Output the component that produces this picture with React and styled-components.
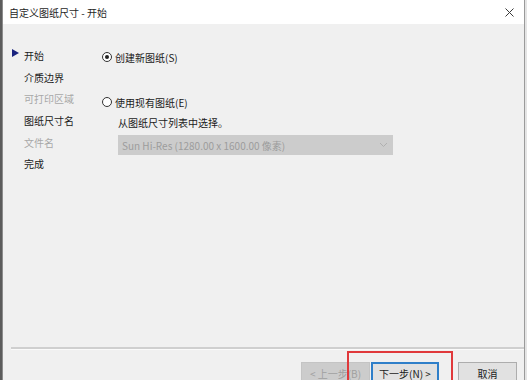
import React from 'react';
import styled, { createGlobalStyle } from 'styled-components';

const GlobalStyle = createGlobalStyle`
  html, body {
    margin: 0;
    padding: 0;
    width: 527px;
    height: 380px;
    overflow: hidden;
    background: linear-gradient(to right, #5c5c5c 0 2px, #e4e4e4 2px);
    font-family: "Noto Sans CJK SC", "Noto Sans", sans-serif;
  }
`;

const navItems = [
  { label: '开始', current: true },
  { label: '介质边界' },
  { label: '可打印区域', disabled: true },
  { label: '图纸尺寸名' },
  { label: '文件名', disabled: true },
  { label: '完成' },
];

function App() {
  return (
    <>
      <GlobalStyle />
      <Window>
        <TitleBar>
          <Title>自定义图纸尺寸 - 开始</Title>
          <CloseIcon width="11" height="11" viewBox="0 0 11 11">
            <path d="M1.5 1.5 L9.5 9.5 M9.5 1.5 L1.5 9.5" stroke="#3a3a3a" strokeWidth="1" fill="none" />
          </CloseIcon>
        </TitleBar>
        <Body>
          <Nav>
            {navItems.map((item) => (
              <NavItem key={item.label} $disabled={item.disabled}>
                <Marker>
                  {item.current && (
                    <svg width="7" height="8" viewBox="0 0 7 8">
                      <path d="M0 0 L7 4 L0 8 Z" fill="#1a237e" />
                    </svg>
                  )}
                </Marker>
                {item.label}
              </NavItem>
            ))}
          </Nav>
          <Pane>
            <RadioRow>
              <Radio $checked />
              创建新图纸(S)
            </RadioRow>
            <RadioRow $top={31}>
              <Radio />
              使用现有图纸(E)
            </RadioRow>
            <Hint>从图纸尺寸列表中选择。</Hint>
            <Select>
              <span>Sun Hi-Res (1280.00 x 1600.00 像素)</span>
              <svg width="9" height="6" viewBox="0 0 9 6">
                <path d="M1 1 L4.5 4.5 L8 1" stroke="#b0b0b0" strokeWidth="1" fill="none" />
              </svg>
            </Select>
          </Pane>
        </Body>
        <Footer>
          <Separator />
          <Buttons>
            <Button $disabled $width={69}>&lt; 上一步(B)</Button>
            <Button $primary $width={68}>下一步(N) &gt;</Button>
            <Button $width={59} $gap={19}>取消</Button>
          </Buttons>
          <Highlight />
        </Footer>
      </Window>
    </>
  );
}

const Window = styled.div`
  margin-left: 2px;
  width: 523px;
  height: 380px;
  border-left: 1px solid #8c8c8c;
  border-right: 1px solid #9a9a9a;
  background: #f0f0f0;
  display: flex;
  flex-direction: column;
  box-sizing: border-box;
`;

const TitleBar = styled.div`
  height: 24px;
  background: #ffffff;
  display: flex;
  align-items: center;
  justify-content: space-between;
  padding: 0 9px 0 6px;
`;

const Title = styled.span`
  font-size: 10px;
  color: #1e1e1e;
`;

const CloseIcon = styled.svg`
  display: block;
`;

const Body = styled.div`
  flex: 1;
  display: flex;
`;

const Nav = styled.div`
  width: 99px;
  padding: 21px 0 0 9px;
  box-sizing: border-box;
  display: flex;
  flex-direction: column;
`;

const NavItem = styled.div`
  height: 21.6px;
  display: flex;
  align-items: center;
  font-size: 10px;
  color: ${(p) => (p.$disabled ? '#a8a8a8' : '#1a1a1a')};
`;

const Marker = styled.span`
  width: 12px;
  display: flex;
  align-items: center;
  position: relative;
  top: -3px;
`;

const Pane = styled.div`
  flex: 1;
  padding-top: 26px;
  display: flex;
  flex-direction: column;
`;

const RadioRow = styled.div`
  display: flex;
  align-items: center;
  gap: 3px;
  font-size: 10px;
  color: #1a1a1a;
  height: 14px;
  margin-top: ${(p) => p.$top || 0}px;
`;

const Radio = styled.span`
  width: 10px;
  height: 10px;
  border: 1px solid #333;
  border-radius: 50%;
  background: #fff;
  box-sizing: border-box;
  display: flex;
  align-items: center;
  justify-content: center;

  &::after {
    content: '';
    width: 4px;
    height: 4px;
    border-radius: 50%;
    background: ${(p) => (p.$checked ? '#222' : 'transparent')};
  }
`;

const Hint = styled.div`
  font-size: 10px;
  color: #1a1a1a;
  margin: 6px 0 0 16px;
  height: 14px;
  display: flex;
  align-items: center;
`;

const Select = styled.div`
  margin: 6px 0 0 16px;
  width: 275px;
  height: 20px;
  background: #cccccc;
  display: flex;
  align-items: center;
  justify-content: space-between;
  padding: 0 5px 0 4px;
  box-sizing: border-box;
  font-size: 10px;
  color: #9c9c9c;
`;

const Footer = styled.div`
  height: 33px;
  position: relative;
  padding: 0 0 0 8px;
`;

const Separator = styled.div`
  height: 2px;
  background: #cfcfcf;
  border-bottom: 1px solid #fafafa;
`;

const Buttons = styled.div`
  display: flex;
  justify-content: flex-end;
  padding: 12px 7px 0 0;
`;

const Button = styled.div`
  width: ${(p) => p.$width}px;
  height: 22px;
  margin-left: ${(p) => p.$gap || 1}px;
  box-sizing: border-box;
  display: flex;
  align-items: center;
  justify-content: center;
  font-size: 10px;
  color: ${(p) => (p.$disabled ? '#a0a0a0' : '#1a1a1a')};
  background: ${(p) => (p.$disabled ? '#cccccc' : '#e1e1e1')};
  border: 1px solid ${(p) => (p.$primary ? '#2f7fc9' : p.$disabled ? '#c4c4c4' : '#adadad')};
  box-shadow: ${(p) => (p.$primary ? 'inset 0 0 0 1px #2f7fc9' : 'none')};
`;

const Highlight = styled.div`
  position: absolute;
  left: 344px;
  top: 4px;
  width: 106px;
  height: 40px;
  border: 2px solid #e0393b;
  box-sizing: border-box;
  pointer-events: none;
`;

export default App;
